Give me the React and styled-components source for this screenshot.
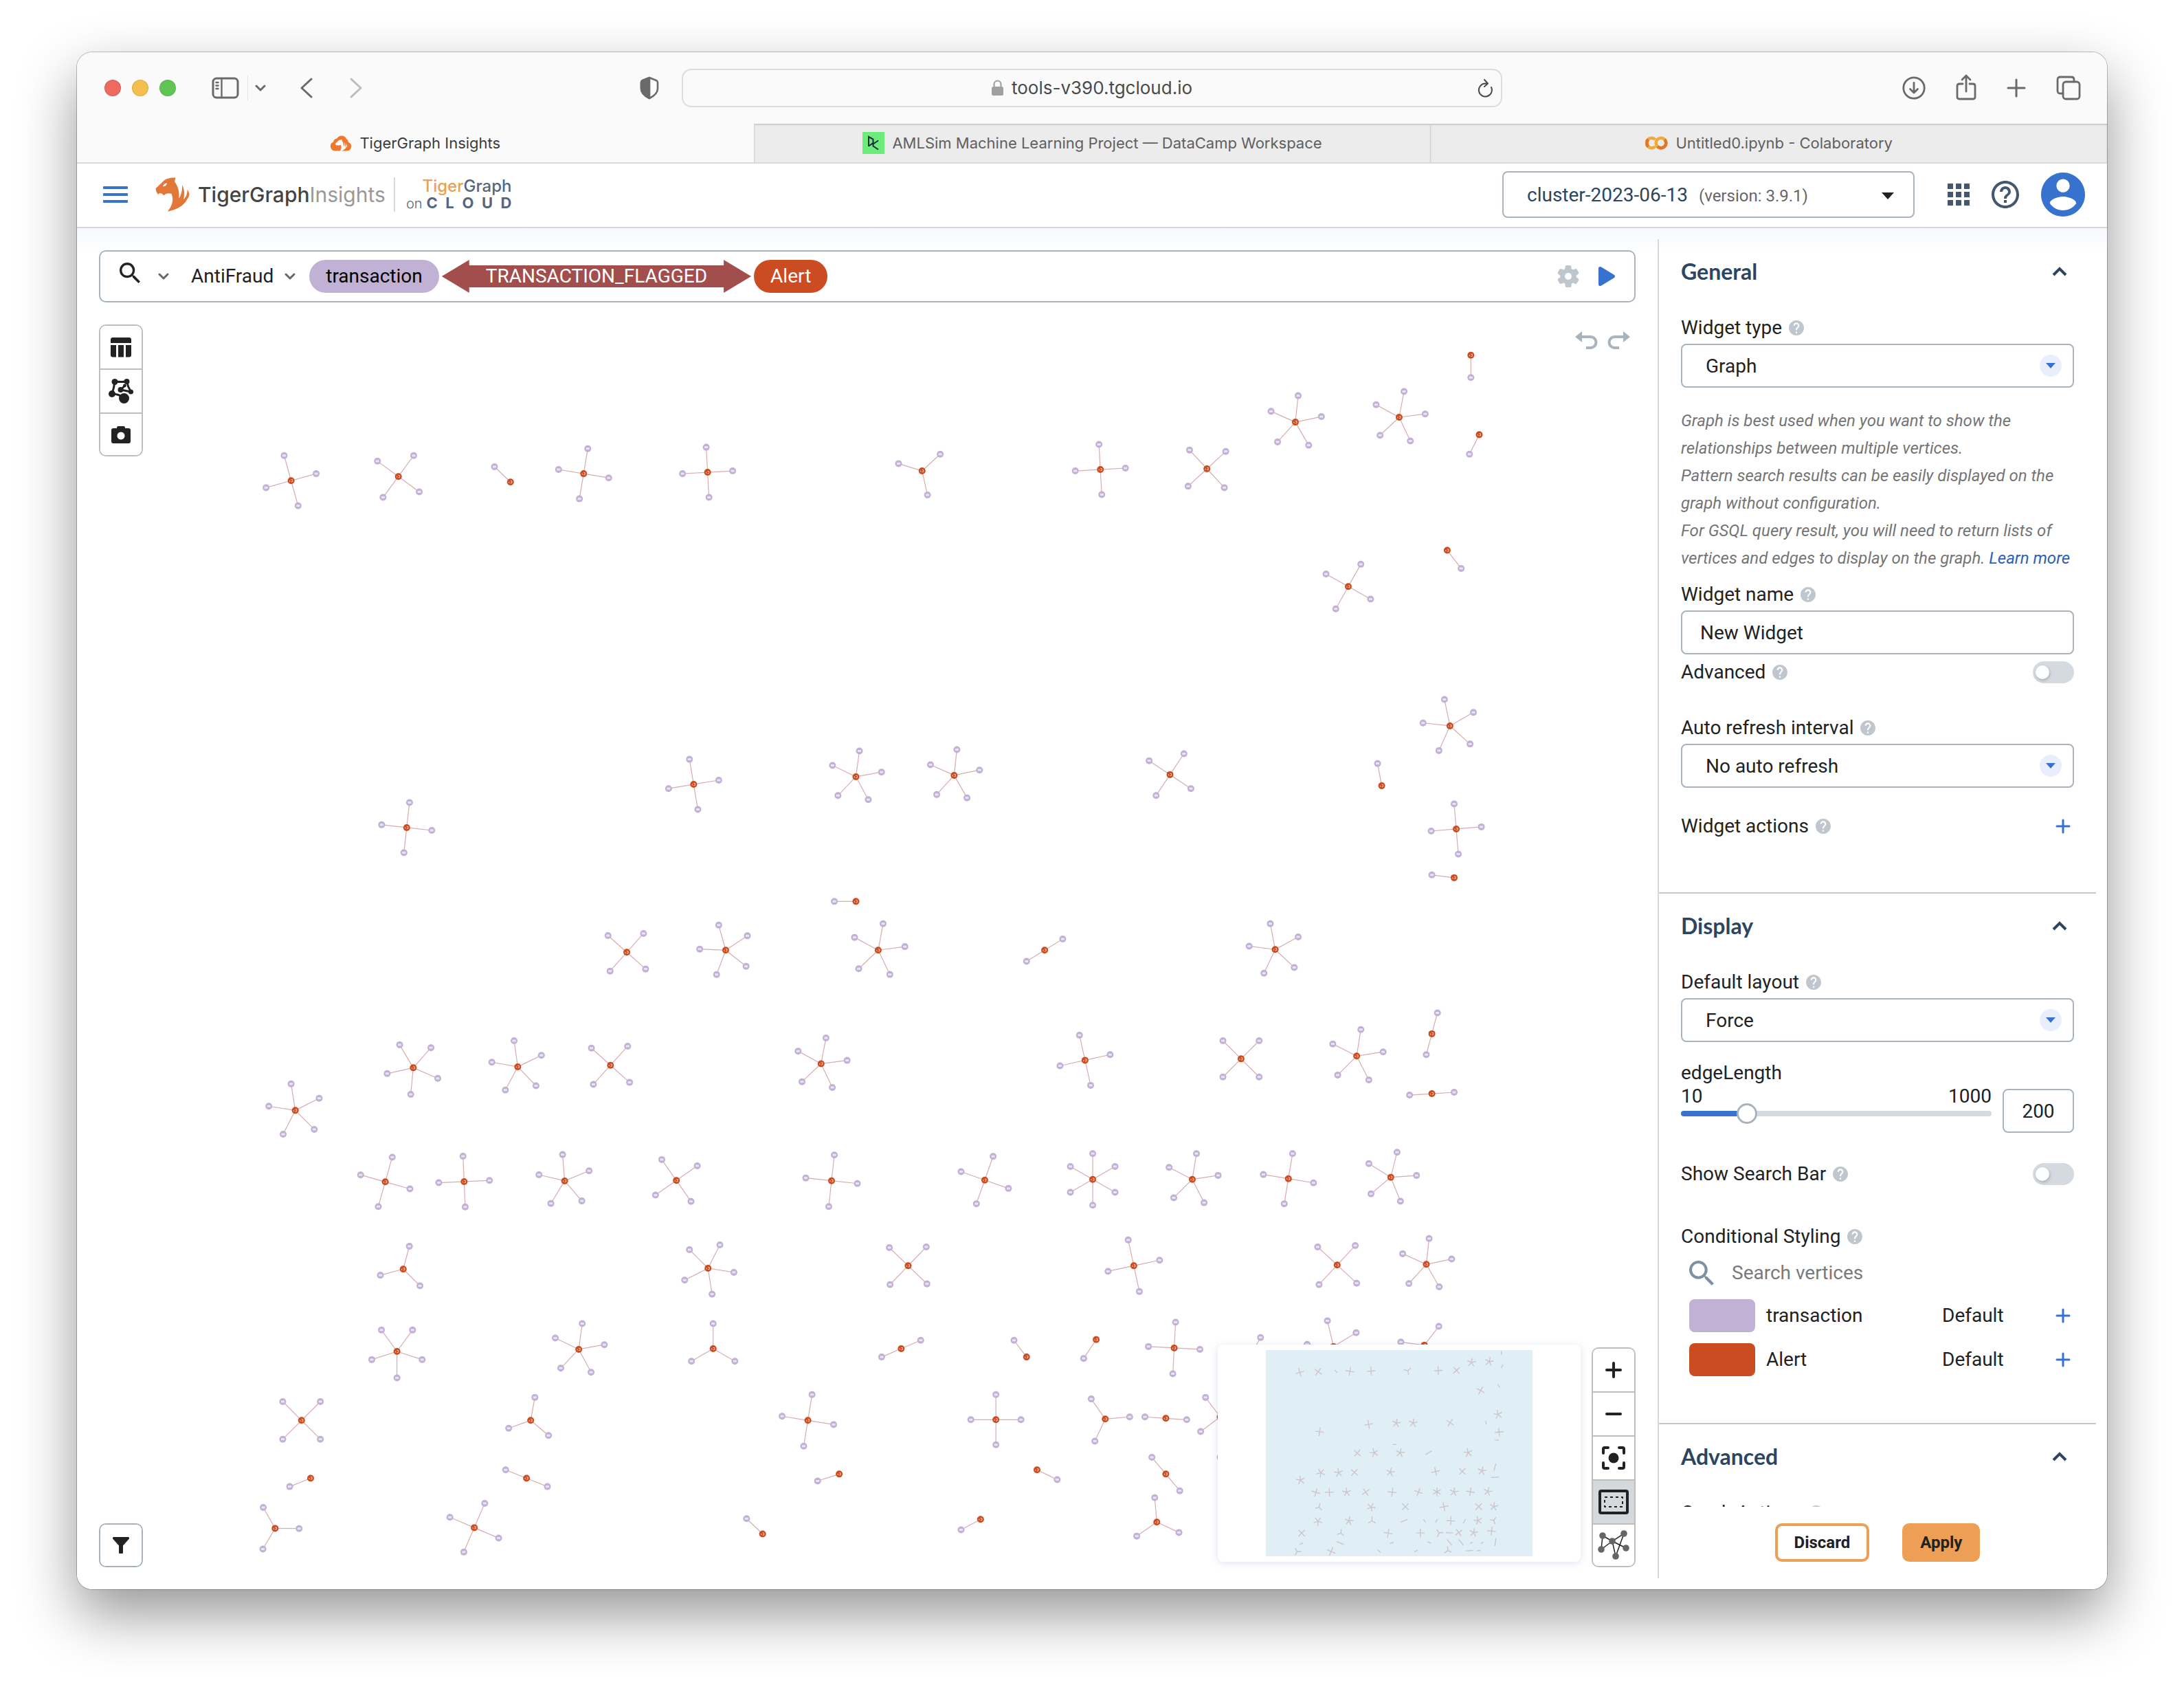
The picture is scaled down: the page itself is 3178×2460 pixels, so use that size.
import React, { useState } from "react";
import styled, { createGlobalStyle, css } from "styled-components";

const c = {
  blue: "#3672ce",
  navy: "#2c4560",
  slate: "#45576c",
  line: "#a9b3be",
  pale: "#d4dadf",
  ink: "#222222",
  grey: "#757575",
  orange: "#ed9f56",
  violet: "#c1b1d4",
  rust: "#cc4c22",
  chrome: "#6a6a6a",
};

const GlobalStyle = createGlobalStyle`
  *, *::before, *::after { box-sizing: border-box; }
  body { margin: 0; background: #ffffff; }
  button, input, select { font: inherit; color: inherit; margin: 0; }
  svg { display: block; flex: none; }
`;

/* ---------- window ---------- */

const Page = styled.div`
  height: 100vh;
  padding: 76px 112px 148px;
  overflow: hidden;
  font-family: Roboto, "Liberation Sans", sans-serif;
  font-size: 28px;
  line-height: 34px;
  color: ${c.ink};
`;

const Window = styled.div`
  height: 100%;
  display: flex;
  flex-direction: column;
  overflow: hidden;
  background: #ffffff;
  border-radius: 22px;
  box-shadow: 0 0 0 1px rgba(0, 0, 0, 0.24), 0 36px 84px rgba(0, 0, 0, 0.42);
`;

const TitleBar = styled.div`
  flex: none;
  height: 104px;
  display: grid;
  grid-template-columns: 1fr minmax(0, 1194px) 1fr;
  align-items: center;
  background: #fafafa;
  color: ${c.chrome};
  font-family: Inter, "Liberation Sans", sans-serif;
`;

const BarSide = styled.div`
  display: flex;
  align-items: center;
  justify-content: ${(p) => (p.$end ? "flex-end" : "flex-start")};
  gap: ${(p) => p.$gap || 0}px;
  padding: ${(p) => p.$pad || 0};
`;

const Lights = styled.div`
  display: flex;
  gap: 16px;
  margin-right: 52px;
`;

const Light = styled.span`
  width: 24px;
  height: 24px;
  border-radius: 50%;
  background: ${(p) => p.$color};
  border: 1px solid rgba(0, 0, 0, 0.1);
`;

const IconButton = styled.button`
  display: flex;
  align-items: center;
  justify-content: center;
  padding: 0;
  border: 0;
  background: none;
  color: ${(p) => p.$color || "inherit"};
  cursor: pointer;
`;

const Rule = styled.span`
  width: ${(p) => p.$w || 1}px;
  height: ${(p) => p.$h}px;
  background: ${(p) => p.$color};
  margin: ${(p) => p.$m || 0};
`;

const Arrows = styled.div`
  display: flex;
  gap: 54px;
  margin-left: 50px;
`;

const ShieldSlot = styled.span`
  margin-left: auto;
`;

const Address = styled.div`
  height: 56px;
  display: grid;
  grid-template-columns: 1fr auto 1fr;
  align-items: center;
  border: 2px solid #dddddd;
  border-radius: 14px;
  padding: 0 12px;
  color: #4a4a4a;
  font-size: 26px;
`;

const AddressText = styled.span`
  display: flex;
  align-items: center;
  gap: 12px;
  grid-column: 2;
`;

const Reload = styled(IconButton)`
  justify-self: end;
`;

const TabBar = styled.nav`
  flex: none;
  height: 58px;
  display: grid;
  grid-template-columns: repeat(3, 1fr);
  border-bottom: 2px solid #d9d9d9;
  background: #fafafa;
  font-family: Inter, "Liberation Sans", sans-serif;
  font-size: 22px;
  font-weight: 400;
`;

const Tab = styled.a`
  display: flex;
  align-items: center;
  justify-content: center;
  gap: 11px;
  text-decoration: none;
  color: #3c3c3c;
  ${(p) =>
    !p.$active &&
    css`
      color: #606060;
      background: #ececec;
      border-left: 1px solid #d2d2d2;
      box-shadow: inset 0 2px 3px -1px #b4b4b4;
    `}
`;

/* ---------- application header ---------- */

const Header = styled.header`
  flex: none;
  height: 94px;
  display: flex;
  align-items: center;
  padding: 0 32px 2px 38px;
  border-bottom: 2px solid ${c.pale};
`;

const Brand = styled.div`
  display: flex;
  align-items: center;
  gap: 12px;
  margin-left: 40px;
`;

const BrandName = styled.span`
  font-family: Inter, "Liberation Sans", sans-serif;
  font-size: 30px;
  font-weight: 500;
  color: #444444;
`;

const BrandLight = styled.span`
  font-weight: 400;
  color: #999999;
`;

const CloudBrand = styled.div`
  display: grid;
  grid-template-columns: auto 124px;
  column-gap: 6px;
  align-items: baseline;
  margin-left: 4px;
  color: #55677f;
  font-family: Inter, "Liberation Sans", sans-serif;
  font-size: 24px;
  line-height: 24px;
`;

const CloudName = styled.span`
  grid-column: 2;
  justify-self: end;
  font-weight: 500;
`;

const Warm = styled.span`
  color: ${c.orange};
`;

const CloudOn = styled.span`
  font-weight: 300;
  font-size: 20px;
`;

const CloudWord = styled.span`
  display: flex;
  justify-content: space-between;
  font-weight: 700;
  font-size: 22px;
`;

const ClusterBox = styled.div`
  width: 600px;
  height: 68px;
  margin-left: auto;
  display: flex;
  align-items: baseline;
  gap: 16px;
  padding: 16px 28px 0 34px;
  border: 2px solid ${c.line};
  border-radius: 8px;
`;

const ClusterSelect = styled.select`
  appearance: none;
  field-sizing: content;
  border: 0;
  padding: 0;
  background: none;
  color: ${c.navy};
`;

const Version = styled.span`
  font-size: 24px;
  color: #666666;
  margin-right: auto;
`;

const ClusterArrow = styled.span`
  align-self: center;
  padding-bottom: 12px;
`;

const HeaderTools = styled.div`
  display: flex;
  align-items: center;
  gap: 32px;
  margin-left: 48px;
`;

/* ---------- body ---------- */

const Body = styled.div`
  flex: 1;
  min-height: 0;
  display: flex;
  gap: 32px;
  padding: 16px;
  background: linear-gradient(#f7f9fe, #ffffff 36px);
`;

const Main = styled.main`
  flex: 1;
  min-width: 0;
  display: flex;
  flex-direction: column;
  padding: 16px 0 0 16px;
`;

const Query = styled.div`
  flex: none;
  height: 76px;
  display: flex;
  align-items: center;
  padding: 0 28px;
  border: 2px solid ${c.line};
  border-radius: 10px;
  background: #ffffff;
`;

const QueryButton = styled(IconButton)`
  gap: ${(p) => p.$gap}px;
  margin-right: ${(p) => p.$after}px;
`;

const Muted = styled.span`
  color: #666666;
`;

const Pattern = styled.div`
  display: flex;
  gap: 4px;
  line-height: 48px;
`;

const Vertex = styled.span`
  padding: 0 24px;
  border-radius: 24px;
  background: ${(p) => p.$bg};
  color: ${(p) => p.$fg};
`;

const Edge = styled.span`
  padding: 0 64px;
  background: #a14e4c;
  color: #ffffff;
  clip-path: polygon(
    0 50%, 40px 0, 40px 8px, calc(100% - 40px) 8px, calc(100% - 40px) 0,
    100% 50%, calc(100% - 40px) 100%, calc(100% - 40px) 40px, 40px 40px, 40px 100%
  );
`;

const QueryTools = styled.div`
  display: flex;
  align-items: center;
  gap: 28px;
  margin-left: auto;
`;

const Canvas = styled.div`
  flex: 1;
  min-height: 0;
  position: relative;
  display: flex;
  justify-content: space-between;
  padding: 32px 0 16px;
`;

const GraphLayer = styled.svg`
  position: absolute;
  inset: 0;
  width: 100%;
  height: 100%;
`;

const CanvasSide = styled.div`
  position: relative;
  display: flex;
  flex-direction: column;
  justify-content: space-between;
  align-items: ${(p) => (p.$end ? "flex-end" : "flex-start")};
`;

const ToolStack = styled.div`
  width: 64px;
  border: 2px solid ${(p) => p.$line || "#bfbeb9"};
  border-radius: 10px;
  overflow: hidden;
  background: #ffffff;
`;

const Tool = styled.button`
  width: 100%;
  height: 64px;
  display: flex;
  align-items: center;
  justify-content: center;
  padding: 0;
  border: 0;
  background: ${(p) => (p.$active ? "#d4d9de" : "#ffffff")};
  color: ${c.ink};
  &:not(:last-child) {
    border-bottom: 2px solid #bfbeb9;
  }
  &:last-child {
    height: 60px;
  }
`;

const History = styled.div`
  display: flex;
  gap: 14px;
  padding: 10px 8px;
  color: ${c.line};
`;

const Navigator = styled.div`
  display: flex;
  align-items: flex-end;
  gap: 16px;
`;

const MiniMap = styled.div`
  width: 528px;
  margin-bottom: 8px;
  padding: 8px;
  display: flex;
  justify-content: center;
  border-radius: 8px;
  background: #ffffff;
  box-shadow: 0 2px 12px rgba(60, 80, 160, 0.16);
`;

/* ---------- settings panel ---------- */

const Panel = styled.aside`
  flex: none;
  width: 638px;
  display: flex;
  flex-direction: column;
  border-left: 2px solid ${c.pale};
`;

const PanelScroll = styled.div`
  flex: 1;
  min-height: 0;
  overflow: hidden;
`;

const Section = styled.section`
  padding: 24px 32px ${(p) => p.$bottom}px;
  border-bottom: 2px solid #c8c8c8;
`;

const SectionHead = styled.div`
  height: 46px;
  display: flex;
  align-items: center;
  justify-content: space-between;
  padding-right: 10px;
  margin-bottom: 36px;
  color: ${c.navy};
`;

const SectionTitle = styled.h2`
  margin: 0;
  font-family: Lato, "Liberation Sans", sans-serif;
  font-size: 32px;
  font-weight: 700;
`;

const Caption = styled.div`
  height: 46px;
  display: flex;
  align-items: center;
  gap: 10px;
  color: ${c.ink};
  svg {
    color: #c0c6ce;
  }
`;

const Row = styled.div`
  height: 52px;
  display: flex;
  align-items: center;
  justify-content: space-between;
  margin-top: ${(p) => p.$top || 0}px;
`;

const Spaced = styled.div`
  margin-top: ${(p) => p.$top}px;
`;

const SelectBox = styled.div`
  display: grid;
  align-items: center;
  > * {
    grid-area: 1 / 1;
  }
`;

const Select = styled.select`
  appearance: none;
  width: 100%;
  height: 64px;
  padding: 2px 60px 0 34px;
  border: 2px solid ${c.line};
  border-radius: 8px;
  background: #ffffff;
`;

const SelectArrow = styled.span`
  justify-self: end;
  width: 32px;
  height: 32px;
  margin-right: 18px;
  display: flex;
  align-items: center;
  justify-content: center;
  border-radius: 50%;
  background: #e9effa;
  color: ${c.blue};
  pointer-events: none;
`;

const Help = styled.p`
  margin: 28px 0 10px;
  font-size: 24px;
  line-height: 40px;
  font-style: italic;
  color: ${c.grey};
  white-space: nowrap;
`;

const Link = styled.a`
  color: #2a60b8;
  text-decoration: none;
`;

const TextInput = styled.input`
  display: block;
  width: 100%;
  height: 64px;
  padding: 0 26px;
  border: 2px solid ${c.line};
  border-radius: 8px;
  background: #ffffff;
`;

const NumberInput = styled(TextInput)`
  flex: none;
  width: 104px;
  padding: 0;
  text-align: center;
`;

const Toggle = styled.input`
  appearance: none;
  width: 60px;
  height: 32px;
  border-radius: 16px;
  padding: 6px 4px;
  display: flex;
  background: ${c.pale};
  &::before {
    content: "";
    width: 20px;
    height: 20px;
    border-radius: 50%;
    background: #ffffff;
    box-shadow: 1px 2px 4px rgba(0, 0, 0, 0.2);
  }
  &:checked {
    background: ${c.blue};
    justify-content: flex-end;
  }
`;

const SliderRow = styled.div`
  display: flex;
  align-items: flex-end;
  gap: 16px;
`;

const SliderColumn = styled.div`
  flex: 1;
  height: 70px;
`;

const SliderScale = styled.div`
  display: flex;
  justify-content: space-between;
`;

const Range = styled.input`
  appearance: none;
  display: block;
  width: 100%;
  height: 16px;
  background: none;
  &::-webkit-slider-runnable-track {
    height: 8px;
    border-radius: 4px;
    background: linear-gradient(
      to right,
      ${c.blue} ${(p) => p.$fill}%,
      ${c.pale} ${(p) => p.$fill}%
    );
  }
  &::-webkit-slider-thumb {
    appearance: none;
    width: 30px;
    height: 30px;
    margin-top: -11px;
    border: 3px solid ${c.line};
    border-radius: 50%;
    background: #ffffff;
  }
`;

const SearchRow = styled.label`
  height: 60px;
  display: flex;
  align-items: center;
  gap: 26px;
  padding-left: 12px;
  color: #7f90a2;
`;

const SearchInput = styled.input`
  flex: 1;
  min-width: 0;
  border: 0;
  padding: 0;
  background: none;
  &::placeholder {
    color: #7a7a7a;
    opacity: 1;
  }
`;

const StyleRow = styled.div`
  height: 64px;
  display: grid;
  grid-template-columns: 96px 1fr 160px 32px;
  align-items: center;
  padding-left: 12px;
`;

const Swatch = styled.span`
  height: 48px;
  border-radius: 8px;
  background: ${(p) => p.$color};
`;

const StyleName = styled.span`
  padding-left: 16px;
`;

const Footer = styled.div`
  flex: none;
  height: 104px;
  display: flex;
  justify-content: center;
  align-items: center;
  gap: 48px;
`;

const ActionButton = styled.button`
  height: 56px;
  padding: 0 ${(p) => (p.$solid ? 22 : 24)}px;
  border: 4px solid ${c.orange};
  border-radius: 10px;
  background: ${(p) => (p.$solid ? c.orange : "#ffffff")};
  font-size: 24px;
  font-weight: 700;
  line-height: 28px;
`;

/* ---------- icons ---------- */

const Stroke = ({ w, h, sw = 3, children, ...rest }) => (
  <svg
    width={w}
    height={h}
    viewBox={`0 0 ${w} ${h}`}
    fill="none"
    stroke="currentColor"
    strokeWidth={sw}
    strokeLinecap="round"
    strokeLinejoin="round"
    aria-hidden="true"
    {...rest}
  >
    {children}
  </svg>
);

const SidebarIcon = () => (
  <Stroke w={40} h={32} sw={3}>
    <rect x="2" y="2" width="36" height="28" rx="5" />
    <path d="M14.500 2v28M6.500 8h3M6.500 12.500h3M6.500 17h3" strokeWidth="2.400" />
  </Stroke>
);
const ChevronDown = ({ w = 16, h = 10, sw = 3 }) => (
  <Stroke w={w} h={h} sw={sw}>
    <path d={`M2 2L${w / 2} ${h - 2}L${w - 2} 2`} />
  </Stroke>
);
const ChevronUp = () => (
  <Stroke w={22} h={14} sw={4} strokeLinecap="butt" strokeLinejoin="miter">
    <path d="M2 12L11 3L20 12" />
  </Stroke>
);
const Back = ({ flip }) => (
  <Stroke w={18} h={30} sw={3}>
    <path d={flip ? "M2 2L16 15L2 28" : "M16 2L2 15L16 28"} />
  </Stroke>
);
const Shield = () => (
  <Stroke w={28} h={34} sw={2.6}>
    <path d="M14 2L4 6Q2 7 2 9V18Q2 26 14 32Q26 26 26 18V9Q26 7 24 6Z" />
    <path d="M14 2L4 6Q2 7 2 9V18Q2 26 14 32Z" fill="currentColor" />
  </Stroke>
);
const Lock = () => (
  <svg width="17" height="24" viewBox="0 0 17 24" fill="none" aria-hidden="true">
    <rect x="0" y="10" width="17" height="13" rx="2.500" fill="#a0a0a0" />
    <path d="M3.500 11V6.500a5 5 0 0 1 10 0V11" stroke="#a0a0a0" strokeWidth="2.200" />
  </svg>
);
const ReloadIcon = () => (
  <Stroke w={22} h={28} sw={2}>
    <path d="M20 13A9.500 9.500 0 1 1 11 7.500L14 7.500M10 2L15 7.500L10 12" />
  </Stroke>
);
const Download = () => (
  <Stroke w={34} h={34} sw={2.8}>
    <circle cx="17" cy="17" r="15.200" />
    <path d="M17 9.500V24M11.500 18.500L17 24L22.500 18.500" />
  </Stroke>
);
const Share = () => (
  <Stroke w={30} h={40} sw={2.8}>
    <path d="M10 14H5Q2 14 2 17V33Q2 36 5 36H25Q28 36 28 33V17Q28 14 25 14H20M15 25V2M9 8L15 2L21 8" />
  </Stroke>
);
const Plus = ({ size = 28, sw = 3 }) => (
  <Stroke w={size} h={size} sw={sw}>
    <path d={`M${size / 2} 2V${size - 2}M2 ${size / 2}H${size - 2}`} />
  </Stroke>
);
const TabsIcon = () => (
  <Stroke w={36} h={36} sw={2.8}>
    <rect x="10" y="9" width="24" height="25" rx="4" />
    <path d="M10 26H6Q2 26 2 22V6Q2 2 6 2H22Q26 2 26 6V9" />
  </Stroke>
);
const TIGER =
  "M86 1C66 2 46 4 34 16L1 48L4 62L12 74C14 66 22 66 28 70L36 77C44 68 56 66 68 70C78 88 76 118 52 146C84 140 116 126 132 100C140 88 146 80 145 70C142 62 140 56 137 52C136 70 132 84 120 94C126 72 124 48 114 32C116 56 110 78 100 90C104 66 98 40 82 18Z";
const CloudIcon = () => (
  <svg width="32" height="24" viewBox="0 0 32 24" aria-hidden="true">
    <path
      d="M7 23.500A6.800 6.800 0 0 1 5 10.500A6 6 0 0 1 10.500 5.500A7.500 7.500 0 0 1 24 6A6 6 0 0 1 27 11A6.500 6.500 0 0 1 25.500 23.500Z"
      fill="#f07830"
    />
    <path d={TIGER} fill="#fff" transform="translate(8 7) scale(.118)" />
  </svg>
);
const CampIcon = () => (
  <svg width="32" height="32" viewBox="0 0 32 32" fill="none" aria-hidden="true">
    <rect width="32" height="32" fill="#6cec7a" />
    <path
      d="M9 21V7L15.500 10.500V16L9 20.500M23 12.500L15.500 17.500V20.500L23 25.500"
      stroke="#0b2a3a"
      strokeWidth="2"
    />
  </svg>
);
const ColabIcon = () => (
  <svg width="33" height="20" viewBox="0 0 33 20" fill="none" strokeWidth="4.600" aria-hidden="true">
    <path d="M14.500 5A7.300 7.300 0 1 0 14.500 15" stroke="#f2a93b" />
    <path d="M4.500 4.800A7.300 7.300 0 0 0 4.500 15.200" stroke="#e2762b" />
    <circle cx="23" cy="10" r="7.300" stroke="#f2a93b" />
    <path d="M28.200 4.800A7.300 7.300 0 0 1 17.800 15.200" stroke="#e2762b" />
  </svg>
);
const MenuIcon = () => (
  <svg width="36" height="26" viewBox="0 0 36 26" fill={c.blue} aria-hidden="true">
    <rect y="1" width="36" height="4" rx="1" />
    <rect y="11" width="36" height="4" rx="1" />
    <rect y="21" width="36" height="4" rx="1" />
  </svg>
);
const TigerLogo = () => (
  <svg width="50" height="50" viewBox="0 0 146 147" aria-hidden="true">
    <path d={TIGER} fill="#e27838" />
    <path d="M32 40C34 30 40 25 50 25L44 36Z" fill="#fff" />
  </svg>
);
const Triangle = ({ w = 18, h = 10 }) => (
  <svg width={w} height={h} viewBox={`0 0 ${w} ${h}`} fill="currentColor" aria-hidden="true">
    <path d={`M0 0H${w}L${w / 2} ${h}Z`} />
  </svg>
);
const AppsIcon = () => (
  <svg width="32" height="32" viewBox="0 0 32 32" fill={c.slate} aria-hidden="true">
    {[0, 12, 24].map((y) => [0, 12, 24].map((x) => <rect key={x + y * 9} x={x} y={y} width="8" height="8" />))}
  </svg>
);
const HelpOutline = () => (
  <svg width="40" height="40" viewBox="2 2 20 20" fill={c.slate} aria-hidden="true">
    <path d="M11 18h2v-2h-2v2zm1-16C6.480 2 2 6.480 2 12s4.480 10 10 10 10-4.480 10-10S17.520 2 12 2zm0 18c-4.410 0-8-3.590-8-8s3.590-8 8-8 8 3.590 8 8-3.590 8-8 8zm0-14c-2.210 0-4 1.790-4 4h2c0-1.100.9-2 2-2s2 .9 2 2c0 2-3 1.750-3 5h2c0-2.250 3-2.500 3-5 0-2.210-1.790-4-4-4z" />
  </svg>
);
const HelpDot = () => (
  <svg width="22" height="22" viewBox="2 2 20 20" fill="currentColor" aria-hidden="true">
    <path d="M12 2C6.480 2 2 6.480 2 12s4.480 10 10 10 10-4.480 10-10S17.520 2 12 2zm1 17h-2v-2h2v2zm2.070-7.750l-.9.920C13.450 12.900 13 13.500 13 15h-2v-.5c0-1.100.450-2.100 1.170-2.830l1.240-1.260c.370-.360.590-.860.590-1.410 0-1.100-.9-2-2-2s-2 .9-2 2H8c0-2.210 1.790-4 4-4s4 1.790 4 4c0 .880-.360 1.680-.930 2.250z" />
  </svg>
);
const Avatar = () => (
  <svg width="64" height="64" viewBox="2 2 20 20" fill={c.blue} aria-hidden="true">
    <path d="M12 2C6.480 2 2 6.480 2 12s4.480 10 10 10 10-4.480 10-10S17.520 2 12 2zm0 3c1.660 0 3 1.340 3 3s-1.340 3-3 3-3-1.340-3-3 1.340-3 3-3zm0 14.200c-2.500 0-4.710-1.280-6-3.220.030-1.990 4-3.080 6-3.080 1.990 0 5.970 1.090 6 3.080-1.290 1.940-3.500 3.220-6 3.220z" />
  </svg>
);
const SEARCH =
  "M15.500 14h-.790l-.280-.270A6.471 6.471 0 0 0 16 9.500 6.500 6.500 0 1 0 9.500 16c1.610 0 3.090-.590 4.230-1.570l.270.280v.790l5 4.990L20.490 19l-4.990-5zm-6 0C7.010 14 5 11.990 5 9.500S7.010 5 9.500 5 14 7.010 14 9.500 11.990 14 9.500 14z";
const SearchIcon = ({ size, rise = 0 }) => (
  <svg width={size} height={size + rise} viewBox={`3 3 17.5 ${(17.5 * (size + rise)) / size}`} fill="currentColor" aria-hidden="true">
    <path d={SEARCH} />
  </svg>
);
const Gear = () => (
  <svg width="32" height="32" viewBox="-16 -16 32 32" fill="#c0c6ce" aria-hidden="true">
    {[0, 60, 120].map((a) => (
      <rect key={a} x="-4.500" y="-16" width="9" height="32" rx="2.500" transform={`rotate(${a})`} />
    ))}
    <circle r="11.800" />
    <circle r="5" fill="#fff" />
  </svg>
);
const Play = () => (
  <svg width="24" height="28" viewBox="0 0 24 28" fill={c.blue} aria-hidden="true">
    <path d="M0 2Q0 0 3 0L5 1L23 12Q25 14 23 16L5 27L3 28Q0 28 0 26Z" />
  </svg>
);
const Undo = ({ flip }) => (
  <svg width="33" height="27" viewBox="0 0 33 27" aria-hidden="true">
    <g transform={flip ? "translate(33 0) scale(-1 1)" : undefined}>
      <path d="M0 8L10 0V16Z" fill="currentColor" />
      <path d="M8 8H22.500a8 8 0 0 1 0 16H16" fill="none" stroke="currentColor" strokeWidth="4" />
    </g>
  </svg>
);
const TableIcon = () => (
  <svg width="30" height="29" viewBox="0 0 30 29" fill="currentColor" aria-hidden="true">
    <path d="M3 0H27Q30 0 30 3V8H0V3Q0 0 3 0ZM0 11H8V28.500H3Q0 28.500 0 25.500ZM11 11H19V28.500H11ZM22 11H30V25.500Q30 28.500 27 28.500H22Z" />
  </svg>
);
const NetworkLogo = () => (
  <svg width="36" height="36" viewBox="0 0 36 36" fill="currentColor" aria-hidden="true">
    <path
      d="M9 4Q18 5 26.500 4M9 4Q8 13 5 22M26.500 4Q28 12 32.500 19M5 22Q15 22 22.500 28M18 16L32.500 19M18 16L23.500 10"
      fill="none"
      stroke="currentColor"
      strokeWidth="3"
    />
    <circle cx="9" cy="4.500" r="4.500" />
    <circle cx="26.500" cy="4" r="4" />
    <circle cx="5" cy="22" r="5" />
    <circle cx="22.500" cy="28.500" r="7.500" />
    <circle cx="32.500" cy="19" r="3.600" />
    <circle cx="17.500" cy="16" r="4" />
    <circle cx="23.500" cy="10" r="2.400" />
  </svg>
);
const Camera = () => (
  <svg width="28" height="25" viewBox="0 0 28 25" fill="currentColor" aria-hidden="true">
    <path fillRule="evenodd" d="M8 3V2Q8 0 10 0H18Q20 0 20 2V3H25Q28 3 28 6V22Q28 25 25 25H3Q0 25 0 22V6Q0 3 3 3ZM14 8.500a5.500 5.500 0 1 0 .01 0Z" />
  </svg>
);
const Funnel = () => (
  <svg width="24" height="24" viewBox="0 0 24 24" fill="currentColor" aria-hidden="true">
    <path d="M1 0H23Q25 1 23.500 3L15 12.500V23Q15 24 14 24H10Q9 24 9 23V12.500L.5 3Q-1 1 1 0Z" />
  </svg>
);
const Minus = () => (
  <Stroke w={24} h={24} sw={4}>
    <path d="M2 12H22" />
  </Stroke>
);
const Focus = () => (
  <Stroke w={34} h={34} sw={4}>
    <path d="M2 10V4Q2 2 4 2H9M25 2H30Q32 2 32 4V10M32 24V30Q32 32 30 32H25M9 32H4Q2 32 2 30V24" />
    <circle cx="17" cy="17" r="7.500" fill="currentColor" stroke="none" />
  </Stroke>
);
const MiniMapIcon = () => (
  <Stroke w={44} h={36} sw={4}>
    <rect x="2" y="2" width="40" height="32" rx="2" />
    <rect x="9" y="11" width="26" height="14" strokeWidth="2" strokeDasharray="4 4" strokeLinecap="butt" />
  </Stroke>
);
const GraphIcon = () => (
  <svg width="46" height="44" viewBox="0 0 46 44" aria-hidden="true">
    <path d="M21 16L7 8L5 28L21 16L38 5L26 38L21 16L41 26" fill="none" stroke="#222" strokeWidth="1.500" />
    {[[7, 8], [38, 5], [21, 16], [5, 28], [41, 26], [26, 38]].map(([x, y]) => (
      <circle key={x} cx={x} cy={y} r="4.800" fill="#666" />
    ))}
  </svg>
);

/* ---------- graph data ---------- */

// Each star: hub x, hub y, number of transactions, and the x, y of its first one.
const UNIT = 2.0268;
const stars = [
  [209, 345, 4, 204, 327], [286, 342, 4, 297, 327], [366.5, 346, 1, 355, 335],
  [419, 340, 4, 422, 322], [508, 339, 4, 507, 321], [662, 338, 3, 675, 326],
  [790, 337, 4, 789, 319], [866.5, 336.5, 4, 880, 324], [930, 303, 5, 932, 284],
  [1004.5, 299.5, 5, 1008, 281], [1056, 255, 1, 1056, 271], [1062, 312, 1, 1055, 326],
  [968, 421, 4, 977, 405], [1039, 395, 1, 1049, 408], [1041, 521, 5, 1037, 502],
  [292, 594, 4, 294, 576], [498, 563, 4, 495, 545], [614.5, 557.5, 5, 617, 539],
  [685, 556.5, 5, 687, 538], [840, 556, 4, 850, 541], [992, 564, 1, 989, 548],
  [1045.5, 595, 4, 1044, 577], [1044, 630, 1, 1028, 628], [614.5, 647, 1, 599, 647],
  [450, 683.5, 4, 462, 670], [521, 682, 5, 516, 664], [630.5, 682, 5, 634, 663],
  [750, 682, 2, 763, 674], [915.5, 681.5, 5, 912, 663], [296.7, 766.4, 5, 294.9, 785.5],
  [371.7, 765.7, 5, 369.1, 747], [438.3, 764.6, 4, 450.6, 750.9], [589.5, 763.5, 5, 593, 745],
  [779, 761, 4, 775, 743], [891, 760, 4, 904, 747], [974, 758, 5, 977, 739],
  [1028, 742, 2, 1032, 727], [1028, 785, 2, 1044, 784], [212, 797, 5, 209, 778],
  [276.6, 848.3, 4, 281.6, 830.6], [333.2, 848.1, 4, 332.4, 829.9], [405.4, 847.6, 5, 403.9, 828.7],
  [485.6, 847.3, 4, 475.1, 832.3], [597, 847.5, 4, 599, 829], [707, 847, 4, 713, 830],
  [784.5, 846.5, 6, 784.5, 828], [856, 846.5, 5, 859, 828], [925, 846, 4, 928, 828],
  [998.5, 845, 5, 1003, 827], [289.5, 910.9, 3, 293.9, 894.5], [508.3, 910.3, 5, 495, 897],
  [652, 908.5, 4, 665, 895], [814, 908.5, 4, 810, 890], [960, 908, 4, 973, 894],
  [1024, 907.5, 5, 1026, 889], [285, 970, 5, 285, 989], [415.5, 968.5, 5, 418, 950],
  [512, 968, 3, 512, 950], [647, 968, 2, 661, 962], [737, 974, 1, 728, 962],
  [787, 961.5, 1, 778, 975], [843, 967.5, 4, 844, 949], [957.4, 966.5, 5, 953, 948],
  [1022.6, 965.5, 3, 1033, 952], [895, 978, 1, 905, 960], [216.5, 1019.5, 4, 230, 1006],
  [381, 1019.5, 3, 384, 1003], [580, 1019.5, 4, 583, 1001], [715, 1019, 4, 715, 1001],
  [793.5, 1018.5, 3, 811, 1017], [837, 1018, 2, 852, 1019], [876, 1017, 4, 865.5, 1003],
  [939, 1017, 5, 942, 999], [1014, 1011, 4, 1016, 993], [223, 1061, 1, 208, 1067],
  [378, 1061, 2, 393, 1067], [602.5, 1058, 1, 587, 1063], [744.5, 1055, 1, 759, 1062],
  [837, 1058, 2, 847, 1070], [886, 1058, 2, 896, 1070], [934, 1057, 1, 924, 1063],
  [980, 1057, 1, 968, 1064], [1030, 1057, 2, 1032, 1041], [197.5, 1097, 3, 189, 1082],
  [340.5, 1096.5, 4, 348, 1079], [547.5, 1101, 1, 536, 1090], [704, 1090.500, 1, 690, 1098],
  [830.5, 1092.5, 3, 829, 1075], [921, 1093, 2, 936, 1092], [967, 1092, 1, 952, 1094],
].map(([x, y, n, ax, ay]) => {
  const hub = { x: x * UNIT, y: y * UNIT };
  const reach = Math.hypot(ax - x, ay - y) * UNIT;
  const start = Math.atan2(ay - y, ax - x);
  const leaves = Array.from({ length: n }, (_, i) => {
    const a = start + (i * 2 * Math.PI) / n;
    return { x: hub.x + reach * Math.cos(a), y: hub.y + reach * Math.sin(a) };
  });
  return { hub, leaves };
});

const Graph = () => (
  <GraphLayer role="img" aria-label="Transactions linked to alerts">
    <g transform="translate(-144 -440)">
      {stars.map(({ hub, leaves }, i) => (
        <g key={i}>
          {leaves.map((l, j) => (
            <g key={j}>
              <line x1={hub.x} y1={hub.y} x2={l.x} y2={l.y} stroke="#d9acab" strokeWidth="1.200" />
              <circle cx={l.x} cy={l.y} r="5" fill={c.violet} />
              <rect x={l.x - 2.5} y={l.y - 1.5} width="5" height="3" fill="#ece4f4" />
            </g>
          ))}
          <circle cx={hub.x} cy={hub.y} r="5" fill={c.rust} />
          <path
            d={`M${hub.x - 2} ${hub.y + 1.5}V${hub.y - 0.5}M${hub.x} ${hub.y - 1.5}L${hub.x + 2} ${hub.y - 1.5}V${hub.y + 1.5}H${hub.x}`}
            fill="none"
            stroke="#f6cdbd"
            strokeWidth="1"
          />
        </g>
      ))}
    </g>
  </GraphLayer>
);

const Overview = () => (
  <svg width="388" height="300" viewBox="0 0 388 300" role="img" aria-label="Overview">
    <rect width="388" height="300" fill="#e0eef5" />
    <g transform="translate(-23 -87) scale(.171)" stroke="#c9b6b9" strokeWidth="8" opacity=".75">
      {stars.map(({ hub, leaves }, i) => (
        <path key={i} d={leaves.map((l) => `M${hub.x} ${hub.y}L${l.x} ${l.y}`).join("")} />
      ))}
    </g>
  </svg>
);

/* ---------- panel pieces ---------- */

const Label = ({ children, htmlFor }) => (
  <Caption>
    <label htmlFor={htmlFor}>{children}</label>
    <HelpDot />
  </Caption>
);

const Heading = ({ children }) => (
  <SectionHead>
    <SectionTitle>{children}</SectionTitle>
    <IconButton aria-label={`Collapse ${children}`}>
      <ChevronUp />
    </IconButton>
  </SectionHead>
);

const SelectField = ({ id, label, value }) => (
  <>
    <Label htmlFor={id}>{label}</Label>
    <SelectBox>
      <Select id={id} defaultValue={value}>
        <option>{value}</option>
      </Select>
      <SelectArrow>
        <Triangle w={14} h={8} />
      </SelectArrow>
    </SelectBox>
  </>
);

const AddButton = ({ label }) => (
  <IconButton $color={c.blue} aria-label={label}>
    <Plus size={22} sw={3} />
  </IconButton>
);

const AddSlot = styled.span`
  width: 32px;
  display: flex;
  justify-content: center;
`;

const Settings = () => {
  const [length, setLength] = useState(200);
  const fill = ((length - 10) / 990) * 93 + 3;
  return (
    <Panel>
      <PanelScroll>
        <Section $bottom={70}>
          <Heading>General</Heading>
          <SelectField id="type" label="Widget type" value="Graph" />
          <Help>
            Graph is best used when you want to show the
            <br />
            relationships between multiple vertices.
            <br />
            Pattern search results can be easily displayed on the
            <br />
            graph without configuration.
            <br />
            For GSQL query result, you will need to return lists of
            <br />
            vertices and edges to display on the graph. <Link href="#learn">Learn more</Link>
          </Help>
          <Label htmlFor="name">Widget name</Label>
          <TextInput id="name" defaultValue="New Widget" />
          <Row>
            <Label htmlFor="advanced">Advanced</Label>
            <Toggle id="advanced" type="checkbox" />
          </Row>
          <Spaced $top={32}>
            <SelectField id="refresh" label="Auto refresh interval" value="No auto refresh" />
          </Spaced>
          <Row $top={30}>
            <Label>Widget actions</Label>
            <AddSlot>
              <AddButton label="Add widget action" />
            </AddSlot>
          </Row>
        </Section>
        <Section $bottom={60}>
          <Heading>Display</Heading>
          <SelectField id="layout" label="Default layout" value="Force" />
          <Spaced $top={28}>
            <label htmlFor="edge">edgeLength</label>
            <SliderRow>
              <SliderColumn>
                <SliderScale>
                  <span>10</span>
                  <span>1000</span>
                </SliderScale>
                <Range
                  id="edge"
                  type="range"
                  min="10"
                  max="1000"
                  value={length}
                  $fill={fill}
                  onChange={(e) => setLength(Number(e.target.value))}
                />
              </SliderColumn>
              <NumberInput
                aria-label="edgeLength value"
                value={length}
                onChange={(e) => setLength(Number(e.target.value) || 10)}
              />
            </SliderRow>
          </Spaced>
          <Row $top={34}>
            <Label htmlFor="bar">Show Search Bar</Label>
            <Toggle id="bar" type="checkbox" />
          </Row>
          <Spaced $top={42}>
            <Label>Conditional Styling</Label>
            <SearchRow>
              <SearchIcon size={36} />
              <SearchInput placeholder="Search vertices" />
            </SearchRow>
            {[["transaction", c.violet], ["Alert", c.rust]].map(([name, color]) => (
              <StyleRow key={name}>
                <Swatch $color={color} />
                <StyleName>{name}</StyleName>
                <span>Default</span>
                <AddButton label={`Add style for ${name}`} />
              </StyleRow>
            ))}
          </Spaced>
        </Section>
        <Section $bottom={60}>
          <Heading>Advanced</Heading>
          <Label>Graph Actions</Label>
        </Section>
      </PanelScroll>
      <Footer>
        <ActionButton>Discard</ActionButton>
        <ActionButton $solid>Apply</ActionButton>
      </Footer>
    </Panel>
  );
};

export default function App() {
  return (
    <Page>
      <GlobalStyle />
      <Window>
        <TitleBar>
          <BarSide $pad="0 33px 0 40px">
            <Lights>
              <Light $color="#ed6a5f" />
              <Light $color="#f5bf4f" />
              <Light $color="#61c555" />
            </Lights>
            <IconButton aria-label="Show sidebar">
              <SidebarIcon />
            </IconButton>
            <Rule $h={36} $color="#e4e4e4" $m="0 10px 0 12px" />
            <IconButton aria-label="Tab groups">
              <ChevronDown />
            </IconButton>
            <Arrows>
              <IconButton aria-label="Back">
                <Back />
              </IconButton>
              <IconButton aria-label="Forward" $color="#bcbcbc">
                <Back flip />
              </IconButton>
            </Arrows>
            <ShieldSlot>
              <Shield />
            </ShieldSlot>
          </BarSide>
          <Address>
            <AddressText>
              <Lock />
              tools-v390.tgcloud.io
            </AddressText>
            <Reload aria-label="Reload">
              <ReloadIcon />
            </Reload>
          </Address>
          <BarSide $end $gap={44} $pad="0 38px 0 0">
            <IconButton aria-label="Downloads">
              <Download />
            </IconButton>
            <IconButton aria-label="Share">
              <Share />
            </IconButton>
            <IconButton aria-label="New tab">
              <Plus />
            </IconButton>
            <IconButton aria-label="Tab overview">
              <TabsIcon />
            </IconButton>
          </BarSide>
        </TitleBar>
        <TabBar>
          <Tab href="#insights" $active>
            <CloudIcon />
            TigerGraph Insights
          </Tab>
          <Tab href="#datacamp">
            <CampIcon />
            AMLSim Machine Learning Project — DataCamp Workspace
          </Tab>
          <Tab href="#colab">
            <ColabIcon />
            Untitled0.ipynb - Colaboratory
          </Tab>
        </TabBar>
        <Header>
          <IconButton aria-label="Menu">
            <MenuIcon />
          </IconButton>
          <Brand>
            <TigerLogo />
            <BrandName>
              TigerGraph<BrandLight>Insights</BrandLight>
            </BrandName>
            <Rule $w={2} $h={50} $color={c.pale} />
            <CloudBrand>
              <CloudName>
                <Warm>Tiger</Warm>Graph
              </CloudName>
              <CloudOn>on</CloudOn>
              <CloudWord>
                {["C", "L", "O", "U", "D"].map((l) => (
                  <span key={l}>{l}</span>
                ))}
              </CloudWord>
            </CloudBrand>
          </Brand>
          <ClusterBox>
            <ClusterSelect aria-label="Cluster" defaultValue="cluster-2023-06-13">
              <option>cluster-2023-06-13</option>
            </ClusterSelect>
            <Version>(version: 3.9.1)</Version>
            <ClusterArrow>
              <Triangle />
            </ClusterArrow>
          </ClusterBox>
          <HeaderTools>
            <IconButton aria-label="Apps">
              <AppsIcon />
            </IconButton>
            <IconButton aria-label="Help">
              <HelpOutline />
            </IconButton>
            <IconButton aria-label="Account">
              <Avatar />
            </IconButton>
          </HeaderTools>
        </Header>
        <Body>
          <Main>
            <Query>
              <QueryButton aria-label="Search mode" $gap={26} $after={32}>
                <SearchIcon size={30} rise={10} />
                <Muted>
                  <ChevronDown />
                </Muted>
              </QueryButton>
              <QueryButton $gap={16} $after={20}>
                AntiFraud
                <Muted>
                  <ChevronDown />
                </Muted>
              </QueryButton>
              <Pattern>
                <Vertex $bg={c.violet} $fg="#000000">transaction</Vertex>
                <Edge>TRANSACTION_FLAGGED</Edge>
                <Vertex $bg={c.rust} $fg="#ffffff">Alert</Vertex>
              </Pattern>
              <QueryTools>
                <IconButton aria-label="Query settings">
                  <Gear />
                </IconButton>
                <IconButton aria-label="Run">
                  <Play />
                </IconButton>
              </QueryTools>
            </Query>
            <Canvas>
              <Graph />
              <CanvasSide>
                <ToolStack>
                  <Tool aria-label="Table view">
                    <TableIcon />
                  </Tool>
                  <Tool aria-label="Explore graph">
                    <NetworkLogo />
                  </Tool>
                  <Tool aria-label="Screenshot">
                    <Camera />
                  </Tool>
                </ToolStack>
                <ToolStack $line={c.line}>
                  <Tool aria-label="Filter">
                    <Funnel />
                  </Tool>
                </ToolStack>
              </CanvasSide>
              <CanvasSide $end>
                <History>
                  <IconButton aria-label="Undo">
                    <Undo />
                  </IconButton>
                  <IconButton aria-label="Redo">
                    <Undo flip />
                  </IconButton>
                </History>
                <Navigator>
                  <MiniMap>
                    <Overview />
                  </MiniMap>
                  <ToolStack>
                    <Tool aria-label="Zoom in">
                      <Plus size={24} sw={4} />
                    </Tool>
                    <Tool aria-label="Zoom out">
                      <Minus />
                    </Tool>
                    <Tool aria-label="Center graph">
                      <Focus />
                    </Tool>
                    <Tool aria-label="Toggle overview" $active>
                      <MiniMapIcon />
                    </Tool>
                    <Tool aria-label="Change layout">
                      <GraphIcon />
                    </Tool>
                  </ToolStack>
                </Navigator>
              </CanvasSide>
            </Canvas>
          </Main>
          <Settings />
        </Body>
      </Window>
    </Page>
  );
}
